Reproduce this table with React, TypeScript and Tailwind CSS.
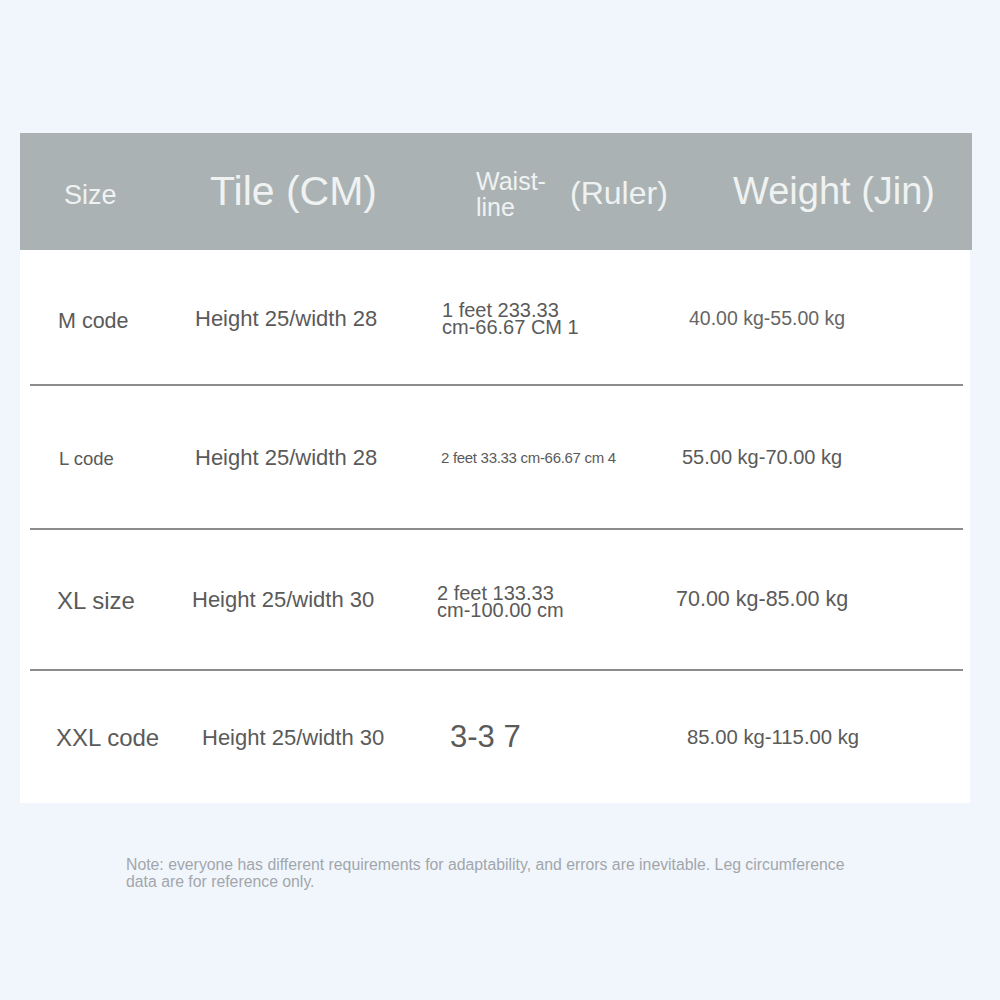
import React from "react";

const font = { fontFamily: '"Liberation Sans", Arial, sans-serif' };

function Divider() {
  return <div className="ml-[10px] mr-[7px] h-[2px] bg-[#8c8c8c]" />;
}

export default function App() {
  return (
    <div
      className="w-[1000px] h-[1000px] bg-[#f1f6fd] pt-[133px] overflow-hidden"
      style={font}
    >
      <div className="ml-[20px] w-[952px]">
        {/* Header */}
        <div className="h-[117px] bg-[#aab2b4] flex items-center text-[#f0f2f2] whitespace-nowrap">
          <div className="w-[170px] pl-[44px] pt-[8px] text-[27px]">Size</div>
          <div className="w-[266px] pl-[20px] text-[41px]">Tile (CM)</div>
          <div className="w-[114px] pl-[20px] pt-[4px] text-[25px] leading-[26px]">
            Waist-
            <br />
            line
          </div>
          <div className="w-[163px] pt-[2px] text-[32px]">(Ruler)</div>
          <div className="text-[38px]">Weight (Jin)</div>
        </div>
        {/* Body */}
        <div className="w-[950px] bg-white text-[#5a5a5a] whitespace-nowrap">
          <div className="h-[134px] flex items-center">
            <div className="w-[170px] pl-[38px] pt-[8px] text-[21.5px]">M code</div>
            <div className="w-[252px] pl-[5px] pt-[2px] text-[22px]">Height 25/width 28</div>
            <div className="w-[247px] pt-[4px] text-[20px] leading-[17px]">
              1 feet 233.33
              <br />
              cm-66.67 CM 1
            </div>
            <div className="pt-[4px] text-[19.5px] text-[#666]">40.00 kg-55.00 kg</div>
          </div>
          <Divider />
          <div className="h-[142px] flex items-center">
            <div className="w-[170px] pl-[39px] pt-[4px] text-[18.5px]">L code</div>
            <div className="w-[251px] pl-[5px] text-[22px]">Height 25/width 28</div>
            <div className="w-[241px] pt-[2px] text-[15px] tracking-[-0.3px]">
              2 feet 33.33 cm-66.67 cm 4
            </div>
            <div className="text-[20px]">55.00 kg-70.00 kg</div>
          </div>
          <Divider />
          <div className="h-[139px] flex items-center">
            <div className="w-[172px] pl-[37px] pt-[2px] text-[24px]">XL size</div>
            <div className="w-[245px] text-[22px]">Height 25/width 30</div>
            <div className="w-[239px] pt-[4px] text-[20px] leading-[17px]">
              2 feet 133.33
              <br />
              cm-100.00 cm
            </div>
            <div className="text-[21.5px]">70.00 kg-85.00 kg</div>
          </div>
          <Divider />
          <div className="h-[132px] flex items-center">
            <div className="w-[182px] pl-[36px] pt-[2px] text-[24px]">XXL code</div>
            <div className="w-[248px] text-[22px]">Height 25/width 30</div>
            <div className="w-[237px] text-[31px]">3-3 7</div>
            <div className="text-[20.3px]">85.00 kg-115.00 kg</div>
          </div>
        </div>
      </div>
      <div className="ml-[126px] mt-[53px] w-[740px] text-[15.8px] leading-[17px] text-[#a2a6ab]">
        Note: everyone has different requirements for adaptability, and errors are inevitable. Leg circumference data are for reference only.
      </div>
    </div>
  );
}
